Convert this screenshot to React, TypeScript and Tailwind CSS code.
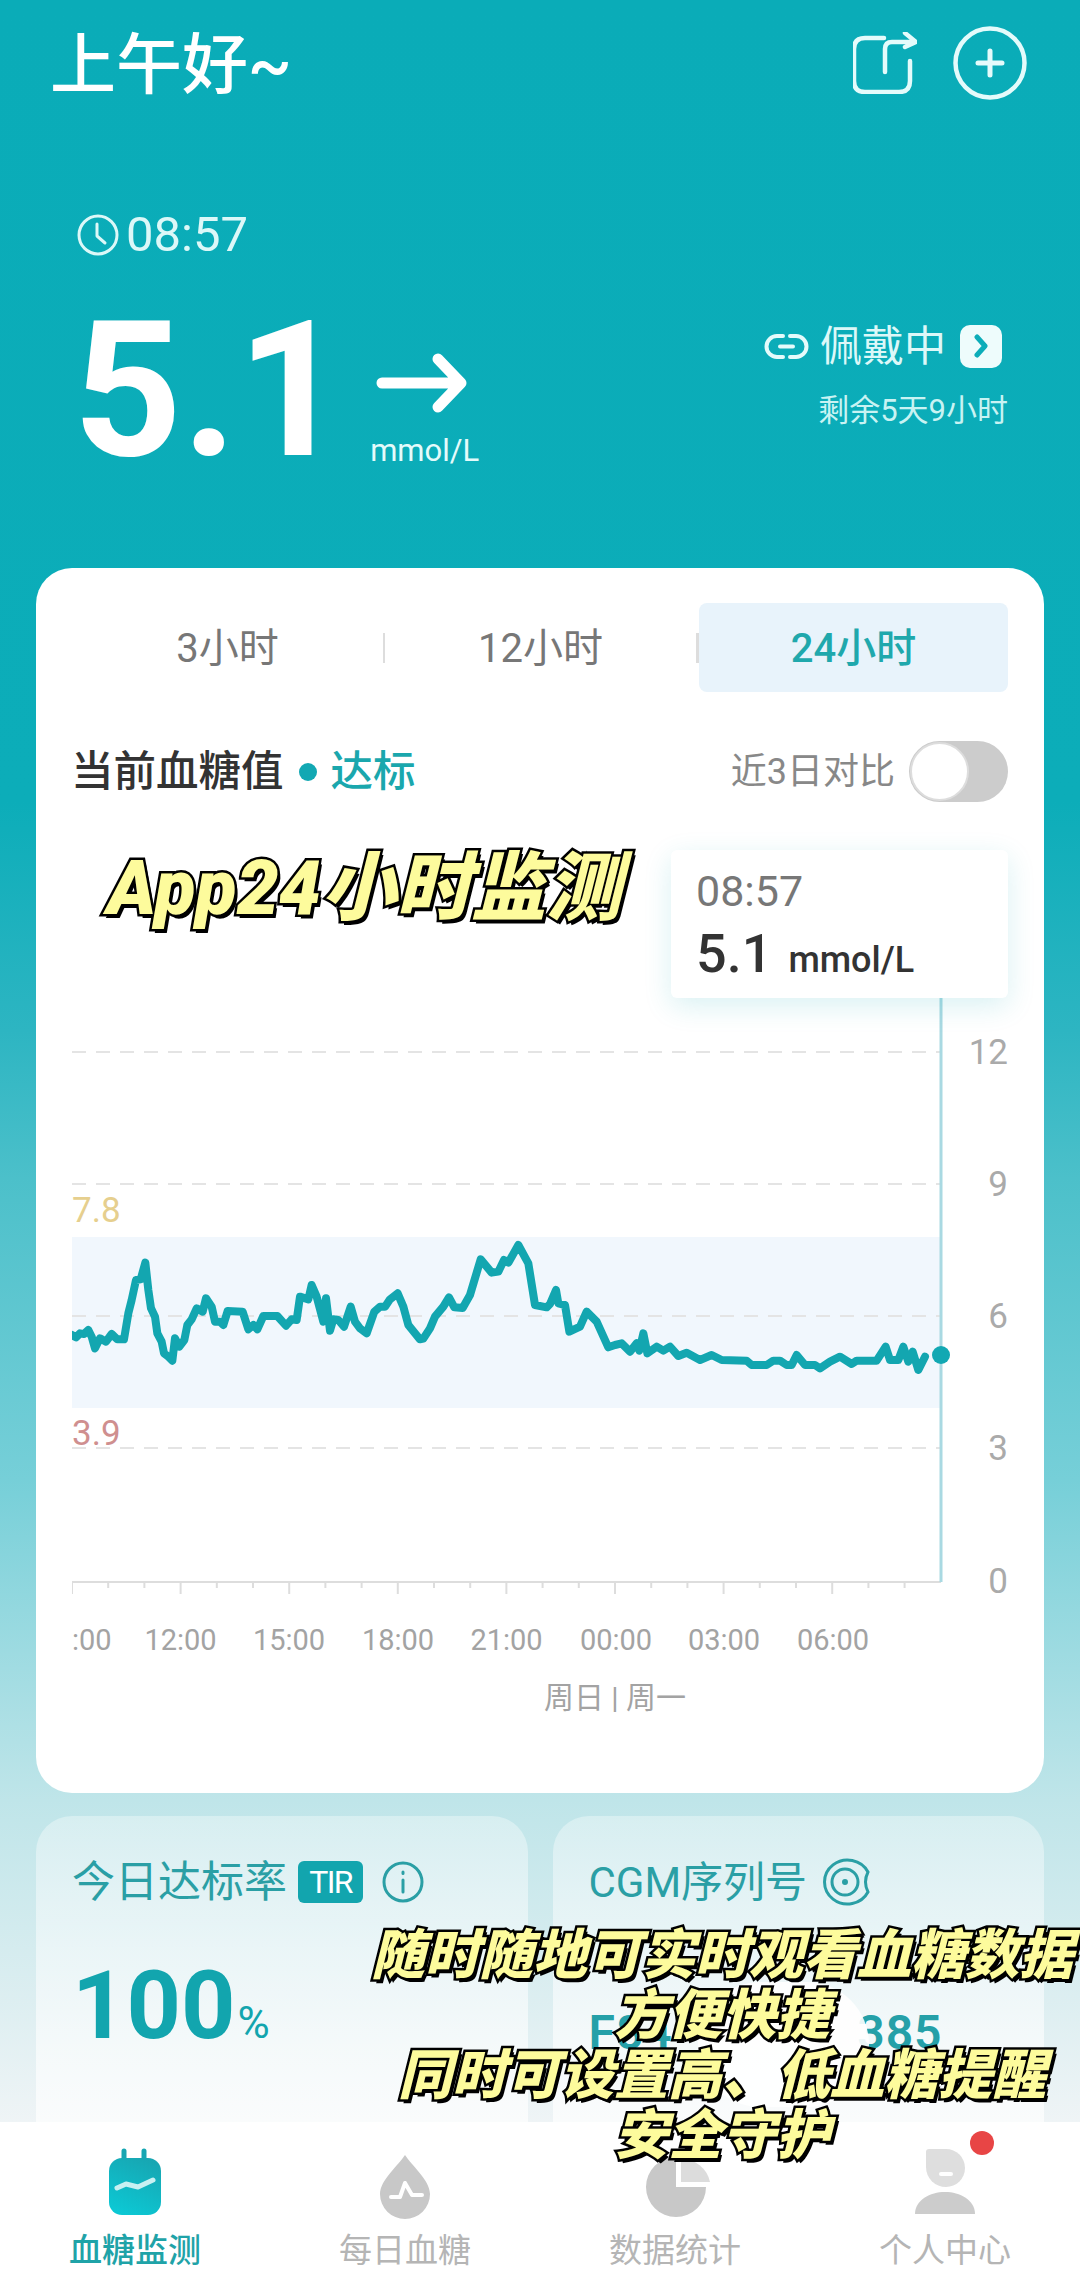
// App.tsx
import React from 'react';

// traced from the reference, in 3x crop units
const leftPts = [[96,465],[108,472],[120,460],[132,462],[145,450],[155,470],[165,505],[180,475],[198,485],[215,462],[232,478],[252,478],[265,400],[275,360],[288,300],[302,298],[316,248],[325,330],[333,385],[345,410],[352,460],[365,485],[372,520],[385,530],[397,542],[405,475],[418,500],[433,480],[442,435],[455,418],[470,385],[488,395],[498,355],[515,380],[525,425],[540,425],[550,435],[563,393],[608,395],[625,448],[640,435],[652,448],[670,408],[712,408],[738,437],[755,418],[770,420],[780,350],[805,358],[815,315],[830,350],[850,425],[858,355],[870,452],[880,418],[895,420],[912,440],[932,380],[945,425],[960,445],[980,460],[1003,395],[1020,380],[1035,380],[1050,358],[1073,340],[1090,380],[1105,435],[1125,460],[1140,478],[1150,476],[1170,445],[1185,410],[1210,380],[1227,352],[1243,382],[1268,384],[1290,345],[1322,238],[1355,278],[1375,275],[1392,240],[1405,248],[1435,195],[1465,250],[1485,375],[1520,382]];
const rightPts = [[30,372],[48,330],[55,370],[75,375],[88,455],[120,440],[140,395],[170,425],[205,502],[225,495],[245,490],[270,515],[290,490],[298,512],[310,460],[322,520],[350,500],[370,512],[390,500],[415,528],[440,518],[480,540],[515,525],[545,540],[620,542],[635,555],[680,555],[700,542],[720,542],[740,555],[755,555],[770,525],[795,555],[825,555],[840,565],[870,545],[900,530],[935,552],[950,542],[1010,542],[1037,500],[1050,540],[1075,540],[1090,500],[1105,545],[1118,515],[1135,570],[1155,530]];

const linePoints = [
  ...leftPts.map(([x, y]) => `${x / 3 + 40},${y / 3 + 1180}`),
  ...rightPts.map(([x, y]) => `${x / 3 + 540},${y / 3 + 1180}`),
].join(' ');

const gridLines = [1052, 1184, 1316, 1448];
const yLabels = [['12', 1052], ['9', 1184], ['6', 1316], ['3', 1448], ['0', 1581]] as const;
const xLabels = [[':00', 72], ['12:00', 180.5], ['15:00', 289], ['18:00', 398], ['21:00', 506.5], ['00:00', 616], ['03:00', 724], ['06:00', 833]] as const;
const ticks = Array.from({ length: 24 }, (_, i) => i);

const Chart = () => (
  <svg viewBox="72 802 936 918" className="block w-[936px] h-[918px]">
    <defs>
      <clipPath id="axis-clip">
        <rect x="72" y="1600" width="936" height="80" />
      </clipPath>
    </defs>
    <rect x="72" y="1237" width="868" height="171" fill="#f1f7fd" />
    {gridLines.map((y) => (
      <line key={y} x1="72" x2="941" y1={y} y2={y} stroke="#e4e4e4" strokeWidth="2" strokeDasharray="14 10" />
    ))}
    <line x1="72" x2="941" y1="1582" y2="1582" stroke="#dddddd" strokeWidth="2" />
    {ticks.map((i) => (
      <line key={i} x1={72 + i * 36.2} x2={72 + i * 36.2} y1="1582" y2={i % 3 === 0 ? 1594 : 1588} stroke="#dddddd" strokeWidth="2" />
    ))}
    <line x1="941" x2="941" y1="998" y2="1582" stroke="#a9d9e2" strokeWidth="3" />
    <polyline points={linePoints} fill="none" stroke="#13a6b0" strokeWidth="8" strokeLinejoin="round" strokeLinecap="round" />
    <circle cx="941" cy="1355" r="9" fill="#12a8b3" />
    <text x="72" y="1222" fontSize="35" fill="#e6cf8e">7.8</text>
    <text x="72" y="1445" fontSize="35" fill="#cf8f8f">3.9</text>
    {yLabels.map(([label, y]) => (
      <text key={label} x="1008" y={y + 12} fontSize="35" textAnchor="end" fill="#aaaaaa">{label}</text>
    ))}
    <g clipPath="url(#axis-clip)">
      {xLabels.map(([label, x]) => (
        <text key={label} x={label === ':00' ? 72 : x} y="1650" fontSize="29" textAnchor={label === ':00' ? 'start' : 'middle'} fill="#a3a3a3">{label}</text>
      ))}
    </g>
    <text x="615" y="1708" fontSize="30" textAnchor="middle" fill="#a3a3a3">周日 | 周一</text>
  </svg>
);

const App: React.FC = () => {
  return (
    <div className="relative flex flex-col w-[1080px] h-[2290px] overflow-hidden [font-family:Roboto,'Noto_Sans_CJK_SC',sans-serif] bg-[linear-gradient(180deg,#0aacb8_0%,#0cadb9_35%,#2db5c2_45%,#4cc0ca_51.5%,#76cfd8_64.6%,#bfe5e9_78.6%,#eff4f6_92.7%)]">
      {/* header */}
      <div className="flex justify-between items-start h-[100px] pl-[50px] pr-[53px] pt-[30px] text-white">
        <h1 className="text-[66px] leading-[72px] font-medium">上午好~</h1>
        <div className="flex items-center gap-[36px] -mt-[4px]">
          <svg width="64" height="62" viewBox="0 0 64 62" fill="none" stroke="#e4fbfb" strokeWidth="4.5" strokeLinecap="round" strokeLinejoin="round">
            <path d="M31 6 H12 Q1 6 1 17 V49 Q1 60 12 60 H46 Q57 60 57 49 V29" />
            <path d="M32 40 V17 Q32 10 39 10 H63 M52 1 L63 10 L52 15" />
          </svg>
          <svg width="74" height="74" viewBox="0 0 74 74" fill="none" stroke="#e4fbfb" strokeWidth="4.5" strokeLinecap="round">
            <circle cx="37" cy="37" r="34.5" />
            <path d="M37 25 V49 M25 37 H49" strokeWidth="5" />
          </svg>
        </div>
      </div>

      {/* current reading */}
      <div className="h-[468px] pl-[77px] pr-[72px] text-white">
        <div className="flex items-center gap-[7px] mt-[113px] h-[44px] text-[49px] text-[#dcf8f8]">
          <svg width="42" height="42" viewBox="0 0 42 42" fill="none" stroke="#dcf8f8" strokeWidth="3" strokeLinecap="round" strokeLinejoin="round">
            <circle cx="21" cy="21" r="19" />
            <path d="M20 10 V22 L28 29" />
          </svg>
          <span>08:57</span>
        </div>
        <div className="flex justify-between items-start mt-[38px]">
          <div className="flex">
            <span className="text-[190px] leading-[190px] font-bold -ml-[4px]">5.1</span>
            <div className="flex flex-col items-center ml-[24px] mt-[58px]">
              <svg className="-ml-[6px]" width="92" height="60" viewBox="0 0 92 60" fill="none" stroke="#ffffff" strokeWidth="11" strokeLinecap="round" strokeLinejoin="round">
                <path d="M6 30 H84 M62 6 L85 30 L62 54" />
              </svg>
              <span className="text-[31px] leading-[32px] mt-[22px] text-[#e4fbfb]">mmol/L</span>
            </div>
          </div>
          <div className="flex flex-col items-end mt-[29px]">
            <div className="flex items-center h-[44px] text-[42px] text-[#dcf8f8]">
              <svg width="45" height="27" viewBox="0 0 45 27" fill="none" stroke="#e4fbfb" strokeWidth="4" strokeLinecap="round">
                <path d="M19 3 H13 A10.5 10.5 0 0 0 13 24 H19" />
                <path d="M26 3 H32 A10.5 10.5 0 0 1 32 24 H26" />
                <path d="M16 13.5 H29" />
              </svg>
              <span className="ml-[11px] mr-[14px]">佩戴中</span>
              <span className="flex items-center justify-center w-[42px] h-[43px] rounded-[10px] bg-[#eefcfc] mr-[6px]">
                <svg width="18" height="24" viewBox="0 0 18 24" fill="none" stroke="#0cadb9" strokeWidth="5" strokeLinecap="round" strokeLinejoin="round">
                  <path d="M5 3 L13 12 L5 21" />
                </svg>
              </span>
            </div>
            <span className="text-[31px] leading-[34px] mt-[26px] text-[#c8f3f3]">剩余5天9小时</span>
          </div>
        </div>
      </div>

      {/* chart card */}
      <div className="mx-[36px] h-[1225px] rounded-[36px] bg-white px-[36px] pt-[35px]">
        <div className="flex items-center h-[89px] text-[40px] text-[#777777]">
          <div className="w-[311px] text-center pt-[2px]">3小时</div>
          <div className="w-[2px] h-[30px] bg-[#dddddd]" />
          <div className="w-[311px] text-center pt-[2px]">12小时</div>
          <div className="w-[3px] h-[30px] bg-[#dddddd]" />
          <div className="flex items-center justify-center w-[309px] h-[89px] pt-[2px] rounded-[8px] bg-[#e8f3fb] font-medium text-[#1fa8ac]">24小时</div>
        </div>

        <div className="flex justify-between items-center h-[61px] mt-[49px]">
          <div className="flex items-center text-[42.5px] font-medium text-[#333333]">
            <span className="-ml-[1px]">当前血糖值</span>
            <span className="w-[18px] h-[18px] rounded-full bg-[#12a8b3] ml-[15px] mr-[14px]" />
            <span className="text-[#1aa7ad]">达标</span>
          </div>
          <div className="flex items-center gap-[14px]">
            <span className="text-[36px] text-[#888888]">近3日对比</span>
            <div className="w-[99px] h-[61px] rounded-full bg-[#cccccc] p-[1px]">
              <div className="w-[59px] h-[59px] rounded-full bg-white border-2 border-[#dddddd]" />
            </div>
          </div>
        </div>

        <div className="relative h-[918px]">
          <Chart />
          <div className="absolute right-0 top-[48px] w-[337px] h-[148px] rounded-[6px] bg-white pl-[25px] pt-[16px] shadow-[0_8px_28px_rgba(20,170,180,0.16)]">
            <div className="text-[43px] leading-[50px] text-[#777777]">08:57</div>
            <div className="flex items-baseline mt-[8px] text-[#333333] font-medium">
              <span className="text-[54px] leading-[60px]">5.1</span>
              <span className="text-[36px] ml-[16px]">mmol/L</span>
            </div>
          </div>
        </div>
      </div>

      {/* stat cards */}
      <div className="flex gap-[25px] mx-[36px] mt-[23px] h-[306px]">
        <div className="flex-1 rounded-t-[36px] bg-[linear-gradient(180deg,rgba(255,255,255,0.35),rgba(255,255,255,0.7))] pl-[36px] pt-[42px]">
          <div className="flex items-center h-[48px] text-[43px] text-[#2a9fa5]">
            <span>今日达标率</span>
            <span className="flex items-center justify-center w-[65px] h-[42px] ml-[11px] rounded-[6px] bg-[#12a5ae] text-[32px] text-white tracking-tighter">TIR</span>
            <svg className="ml-[19px]" width="42" height="42" viewBox="0 0 42 42" fill="none" stroke="#2a9fa5" strokeWidth="3" strokeLinecap="round">
              <circle cx="21" cy="21" r="19" />
              <path d="M21 19 V31 M21 11 V12.5" />
            </svg>
          </div>
          <div className="flex items-baseline mt-[45px] text-[#12a5ae]">
            <span className="text-[95px] leading-[110px] font-bold">100</span>
            <span className="text-[44px] ml-[2px]">%</span>
          </div>
        </div>

        <div className="relative flex-1 rounded-t-[36px] bg-[linear-gradient(180deg,rgba(255,255,255,0.35),rgba(255,255,255,0.7))] pl-[36px] pt-[42px]">
          <div className="flex items-center h-[48px] text-[42px] text-[#2a9fa5]">
            <span>CGM序列号</span>
            <svg className="ml-[14px]" width="50" height="48" viewBox="0 0 50 48" fill="none" stroke="#2a9fa5" strokeWidth="3">
              <path d="M47 14 A23 22 0 1 0 47 34 Q42 24 47 14 Z" />
              <circle cx="24" cy="24" r="13" />
              <circle cx="24" cy="24" r="1.5" fill="#2a9fa5" />
            </svg>
          </div>
          <div className="flex justify-between w-[354px] mt-[99px] text-[48px] leading-[56px] font-semibold tracking-[1px] text-[#25a0a8]">
            <span>F84</span>
            <span>385</span>
          </div>
          <div className="absolute left-[145px] top-[166px] w-[171px] h-[125px] rounded-[70px] bg-white/90" />
        </div>
      </div>

      {/* bottom nav */}
      <div className="grid grid-cols-4 h-[168px] bg-white pt-[26px] text-[33px] text-[#b5b5b5]">
        <div className="flex flex-col items-center">
          <svg width="80" height="72" viewBox="0 0 80 72" fill="none">
            <defs>
              <linearGradient id="nav-grad" x1="0.7" y1="0" x2="0.3" y2="1">
                <stop offset="0" stopColor="#17a6b2" />
                <stop offset="1" stopColor="#0cc8d4" />
              </linearGradient>
            </defs>
            <path d="M29 3 V12 M49 3 V12" stroke="#17a6b2" strokeWidth="5" strokeLinecap="round" />
            <rect x="14" y="10" width="52" height="57" rx="13" fill="url(#nav-grad)" />
            <path d="M22 40 L31 36 L43 39 L58 32" stroke="#c8f0f2" strokeWidth="5" strokeLinecap="round" strokeLinejoin="round" />
          </svg>
          <span className="mt-[11px] leading-[40px] font-medium text-[#1fa3a8]">血糖监测</span>
        </div>
        <div className="flex flex-col items-center">
          <svg width="80" height="72" viewBox="0 0 80 72" fill="none">
            <path d="M40 7 C47 18 65 32 65 46 A25 25 0 0 1 15 46 C15 32 33 18 40 7 Z" fill="#c8c8c8" />
            <path d="M26 49 H35 L40 35 L47 47 H57" stroke="#ffffff" strokeWidth="4" strokeLinecap="round" strokeLinejoin="round" />
          </svg>
          <span className="mt-[11px] leading-[40px]">每日血糖</span>
        </div>
        <div className="flex flex-col items-center">
          <svg width="80" height="72" viewBox="0 0 80 72" fill="none">
            <path d="M41 9 A30 30 0 1 0 71 39 L41 39 Z" fill="#c8c8c8" />
            <path d="M46 11 A29 29 0 0 1 75 34 L46 34 Z" fill="#dcdcdc" />
          </svg>
          <span className="mt-[11px] leading-[40px]">数据统计</span>
        </div>
        <div className="flex flex-col items-center">
          <svg className="overflow-visible" width="80" height="72" viewBox="0 0 80 72" fill="none">
            <path d="M24 1 H41 A19 19 0 0 1 60 20 A19 19 0 0 1 41 39 A20 20 0 0 1 21 19 V4 Q21 1 24 1 Z" fill="#dedede" />
            <path d="M36 26 H46" stroke="#ffffff" strokeWidth="4" strokeLinecap="round" />
            <path d="M10 66 C10 52 25 44 40 44 C55 44 70 52 70 66 Z" fill="#cccccc" />
            <circle cx="77" cy="-5" r="12" fill="#e84545" />
          </svg>
          <span className="mt-[11px] leading-[40px]">个人中心</span>
        </div>
      </div>

      {/* video captions on top of the app */}
      <div className="absolute left-[107px] top-[846px] text-[75px] leading-[84px] italic font-black text-[#fdfb9c] [-webkit-text-stroke:5px_#000] [paint-order:stroke_fill] [text-shadow:3px_4px_0_#000]">
        App24小时监测
      </div>
      <div className="absolute left-[362px] w-[720px] top-[1926px] text-center text-[54px] leading-[60px] italic font-black text-[#fdfb9c] [-webkit-text-stroke:5px_#000] [paint-order:stroke_fill] [text-shadow:3px_4px_0_#000]">
        <div>随时随地可实时观看血糖数据</div>
        <div>方便快捷</div>
        <div>同时可设置高、低血糖提醒</div>
        <div>安全守护</div>
      </div>
    </div>
  );
};

export default App;
